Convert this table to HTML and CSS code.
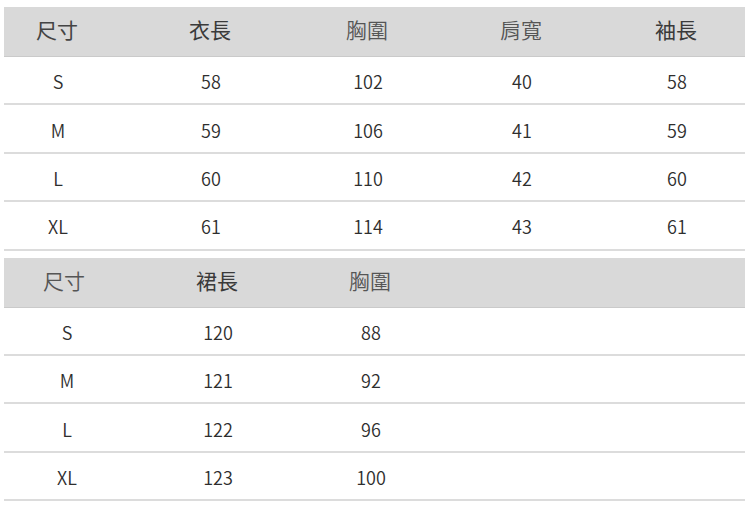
FILE: index.html
```html
<!DOCTYPE html>
<html lang="zh-Hant">
<head>
<meta charset="utf-8">
<link rel="stylesheet" href="styles.css">
</head>
<body>
<div class="page">
  <div class="table t1">
    <div class="row head">
      <div class="c">尺寸</div><div class="c b">衣長</div><div class="c l">胸圍</div><div class="c l">肩寬</div><div class="c b">袖長</div>
    </div>
    <div class="row"><div class="c">S</div><div class="c">58</div><div class="c">102</div><div class="c">40</div><div class="c">58</div></div>
    <div class="row"><div class="c">M</div><div class="c">59</div><div class="c">106</div><div class="c">41</div><div class="c">59</div></div>
    <div class="row"><div class="c">L</div><div class="c">60</div><div class="c">110</div><div class="c">42</div><div class="c">60</div></div>
    <div class="row"><div class="c">XL</div><div class="c">61</div><div class="c">114</div><div class="c">43</div><div class="c">61</div></div>
  </div>
  <div class="table t2">
    <div class="row head">
      <div class="c l">尺寸</div><div class="c b">裙長</div><div class="c l">胸圍</div>
    </div>
    <div class="row"><div class="c">S</div><div class="c">120</div><div class="c">88</div></div>
    <div class="row"><div class="c">M</div><div class="c">121</div><div class="c">92</div></div>
    <div class="row"><div class="c">L</div><div class="c">122</div><div class="c">96</div></div>
    <div class="row"><div class="c">XL</div><div class="c">123</div><div class="c">100</div></div>
  </div>
</div>
</body>
</html>
```
FILE: styles.css
```css
html, body {
  margin: 0;
  padding: 0;
  background: #ffffff;
}
body {
  font-family: "Noto Sans CJK TC", "Noto Sans", sans-serif;
  color: #2e2e2e;
}
.page {
  width: 741px;
  padding: 7px 0 0 4px;
  display: flex;
  flex-direction: column;
  gap: 7px;
}
.table {
  display: flex;
  flex-direction: column;
}
.row {
  display: grid;
  height: 44.4px;
  padding-top: 2px;
  align-items: center;
  border-bottom: 2px solid #dcdcdc;
  font-size: 18px;
  font-weight: 350;
}
.t1 .row {
  grid-template-columns: 108px 198px 116px 192px 118px 1fr;
}
.t2 .row {
  grid-template-columns: 126px 176px 130px 1fr;
}
.row.head {
  height: 45px;
  padding-top: 0;
  padding-bottom: 4px;
  background: #d9d9d9;
  border-bottom: 1px solid #cacaca;
  font-size: 21px;
  font-weight: 400;
  color: #444444;
}
.t1 .row.head {
  grid-template-columns: 106px 200px 114px 194px 116px 1fr;
}
.t2 .row.head {
  grid-template-columns: 120px 186px 120px 1fr;
}
.c {
  text-align: center;
  line-height: 1;
}
.head .b {
  font-weight: 400;
  color: #3a3a3a;
}
.head .l {
  font-weight: 350;
  color: #555555;
}
```
